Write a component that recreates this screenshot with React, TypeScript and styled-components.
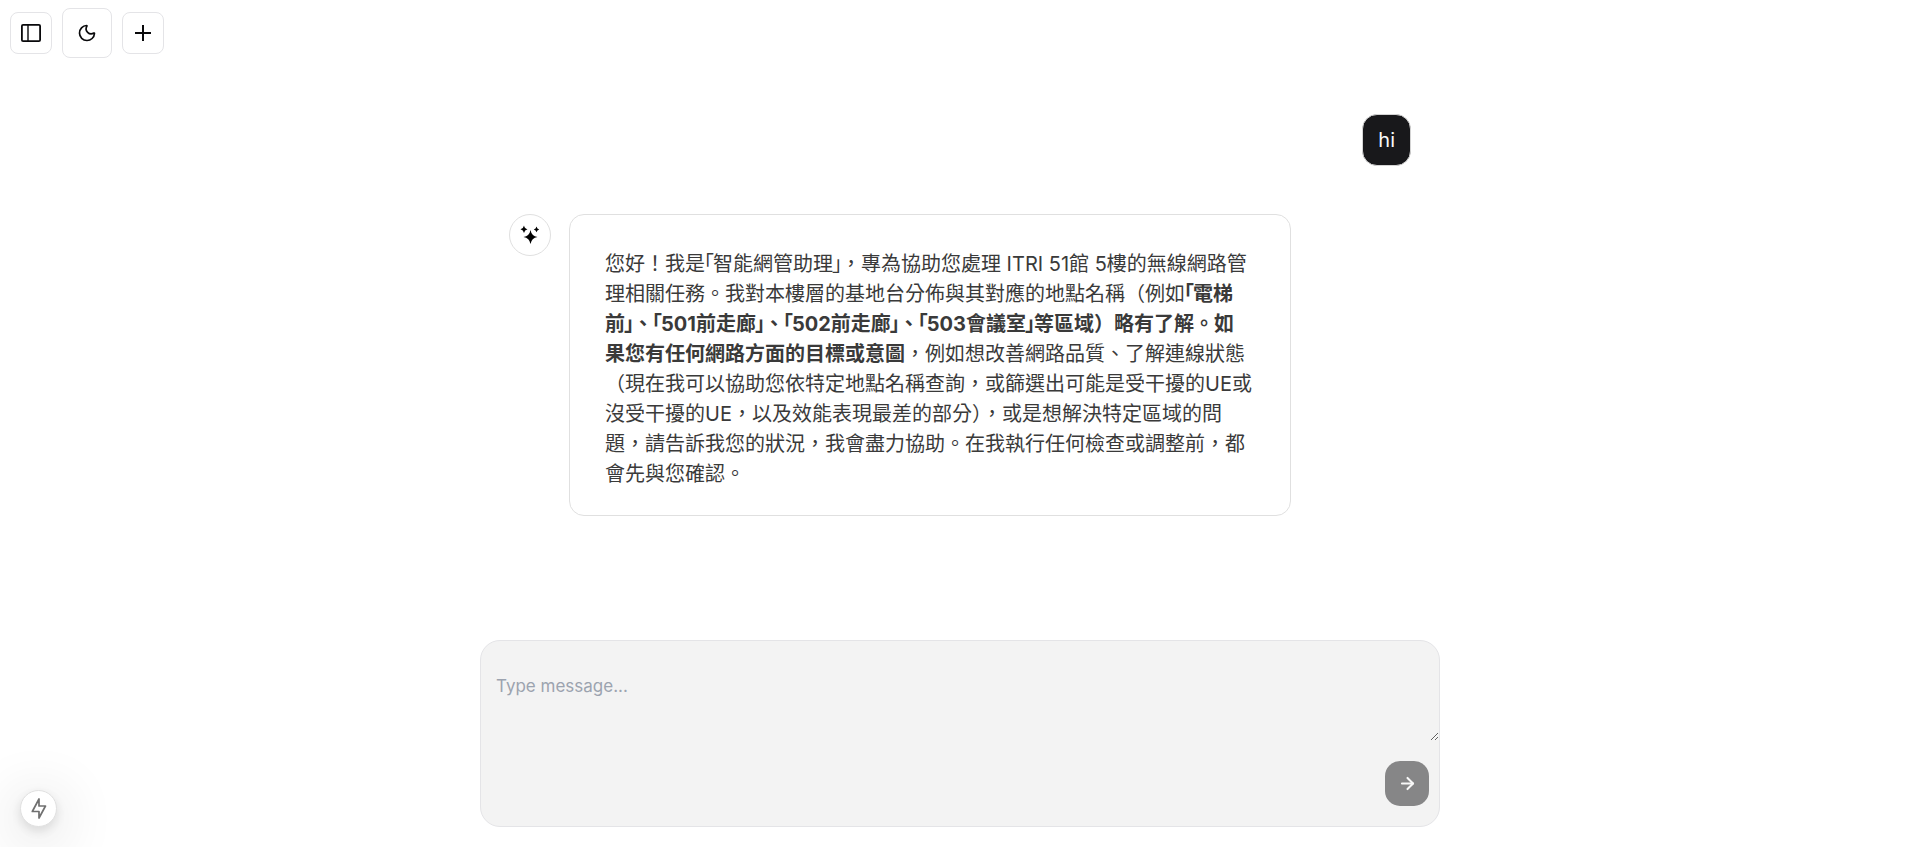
import React from "react";
import styled, { createGlobalStyle } from "styled-components";
import { Moon, ArrowRight } from "lucide-react";

const GlobalStyle = createGlobalStyle`
  *, *::before, *::after { box-sizing: border-box; }
  body {
    margin: 0;
    background: #ffffff;
    color: #09090b;
    font-family: Inter, "Noto Sans CJK TC", sans-serif;
  }
`;

const Page = styled.div`
  display: flex;
  flex-direction: column;
  min-height: 100vh;
`;

const Toolbar = styled.header`
  display: flex;
  align-items: center;
  gap: 10px;
  padding: 8px 10px;
`;

const IconButton = styled.button<{ $size: number }>`
  display: flex;
  align-items: center;
  justify-content: center;
  width: ${(p) => p.$size}px;
  height: ${(p) => p.$size}px;
  padding: 0;
  border: 1px solid #e4e4e7;
  border-radius: 8px;
  background: #ffffff;
  color: #09090b;
  cursor: pointer;
`;

const Conversation = styled.main`
  display: flex;
  flex: 1;
  flex-direction: column;
  gap: 48px;
  width: 100%;
  max-width: 960px;
  margin: 0 auto;
  padding: 48px 29px;
`;

const UserBubble = styled.div`
  align-self: flex-end;
  padding: 10px 15px;
  border: 1px solid #d4d4d4;
  border-radius: 15px;
  background: #18181b;
  color: #fafafa;
  font-size: 20px;
  line-height: 30px;
`;

const ReplyRow = styled.article`
  display: flex;
  align-items: flex-start;
  gap: 18px;
`;

const Avatar = styled.div`
  display: flex;
  flex: none;
  align-items: center;
  justify-content: center;
  width: 42px;
  height: 42px;
  border: 1px solid #e0e0e0;
  border-radius: 50%;
`;

const ReplyCard = styled.div`
  width: 80%;
  padding: 34px 37px 26px 35px;
  border: 1px solid #e0e0e0;
  border-radius: 15px;
  color: #3a3a3a;
`;

const ReplyText = styled.p`
  margin: 0;
  font-size: 20px;
  line-height: 30px;
`;

const Corner = styled.span`
  margin: 0 -1px;
  font-feature-settings: "halt";
`;

const Composer = styled.form`
  display: flex;
  flex-direction: column;
  width: 100%;
  max-width: 960px;
  margin: 0 auto 20px;
  border: 1px solid #e4e4e7;
  border-radius: 20px;
  background: #f3f3f3;
`;

const MessageInput = styled.textarea`
  display: block;
  width: 100%;
  height: 100px;
  padding: 30px 15px;
  border: 0;
  outline: 0;
  background: transparent;
  color: #09090b;
  font-family: inherit;
  font-size: 17px;
  line-height: 30px;
  resize: vertical;

  &::placeholder { color: #9ca3af; }
`;

const ComposerActions = styled.div`
  display: flex;
  justify-content: flex-end;
  padding: 20px 10px;
`;

const SendButton = styled.button`
  display: flex;
  align-items: center;
  justify-content: center;
  width: 44px;
  height: 45px;
  padding: 0;
  border: 0;
  border-radius: 15px;
  background: #868687;
  color: #f8f8f8;
`;

const QuickButton = styled.button`
  position: fixed;
  bottom: 20px;
  left: 20px;
  display: flex;
  align-items: center;
  justify-content: center;
  width: 37px;
  height: 37px;
  padding: 0;
  border: 1px solid #e0e0e0;
  border-radius: 50%;
  background: #ffffff;
  color: #707070;
  box-shadow: 0 4px 12px rgba(0, 0, 0, 0.12), 0 10px 60px rgba(0, 0, 0, 0.24);
`;

const SidebarIcon = () => (
  <svg width="20" height="18" viewBox="0 0 20 18" fill="none" stroke="currentColor" aria-hidden="true">
    <rect x="0.9" y="0.9" width="18.2" height="16.2" rx="1.2" strokeWidth="1.8" />
    <path d="M7 1v16" strokeWidth="1.4" />
  </svg>
);

const PlusIcon = () => (
  <svg width="18" height="18" viewBox="0 0 18 18" fill="none" stroke="currentColor" strokeWidth="2" aria-hidden="true">
    <path d="M9 1v16M1 9h16" />
  </svg>
);

const SparkIcon = () => (
  <svg width="20" height="20" viewBox="0 0 20 20" fill="#000000" aria-hidden="true">
    <path d="M10.500 5Q11.500 11 17.500 12Q11.500 13 10.500 19Q9.500 13 3.500 12Q9.500 11 10.500 5Z" />
    <path d="M4 0.500Q4.600 3.700 7.500 4.300Q4.600 4.900 4 8Q3.400 4.900 0.500 4.300Q3.400 3.700 4 0.500Z" />
    <path d="M16.500 1.500Q17 3.900 19.200 4.400Q17 4.900 16.500 7.200Q16 4.900 13.800 4.400Q16 3.900 16.500 1.500Z" />
  </svg>
);

const BoltIcon = () => (
  <svg width="16" height="21" viewBox="0 0 16 21" fill="none" stroke="currentColor" strokeWidth="1.7" strokeLinejoin="round" aria-hidden="true">
    <path d="M8 1V8H14.500L8 20V13.500H1.300Z" />
  </svg>
);

const Open = () => <Corner>「</Corner>;
const Close = () => <Corner>」</Corner>;

export default function App() {
  return (
    <>
      <GlobalStyle />
      <Page>
        <Toolbar>
          <IconButton type="button" $size={42} aria-label="Toggle sidebar">
            <SidebarIcon />
          </IconButton>
          <IconButton type="button" $size={50} aria-label="Toggle theme">
            <Moon size={20} />
          </IconButton>
          <IconButton type="button" $size={42} aria-label="New chat">
            <PlusIcon />
          </IconButton>
        </Toolbar>
        <Conversation>
          <UserBubble>hi</UserBubble>
          <ReplyRow>
            <Avatar>
              <SparkIcon />
            </Avatar>
            <ReplyCard>
              <ReplyText lang="zh-Hant">
                您好！我是<Open />智能網管助理<Close />，專為協助您處理 ITRI 51館 5樓的無線網路管理相關任務。我對本樓層的基地台分佈與其對應的地點名稱（例如
                <strong>
                  <Open />電梯前<Close />、<Open />501前走廊<Close />、<Open />502前走廊<Close />、<Open />503會議室<Close />等區域）略有了解。如果您有任何網路方面的目標或意圖
                </strong>
                ，例如想改善網路品質、了解連線狀態（現在我可以協助您依特定地點名稱查詢，或篩選出可能是受干擾的UE或沒受干擾的UE，以及效能表現最差的部分），或是想解決特定區域的問題，請告訴我您的狀況，我會盡力協助。在我執行任何檢查或調整前，都會先與您確認。
              </ReplyText>
            </ReplyCard>
          </ReplyRow>
        </Conversation>
        <Composer>
          <MessageInput aria-label="Message" placeholder="Type message..." />
          <ComposerActions>
            <SendButton type="button" aria-label="Send message">
              <ArrowRight size={19} strokeWidth={2.6} />
            </SendButton>
          </ComposerActions>
        </Composer>
      </Page>
      <QuickButton type="button" aria-label="Quick actions">
        <BoltIcon />
      </QuickButton>
    </>
  );
}
